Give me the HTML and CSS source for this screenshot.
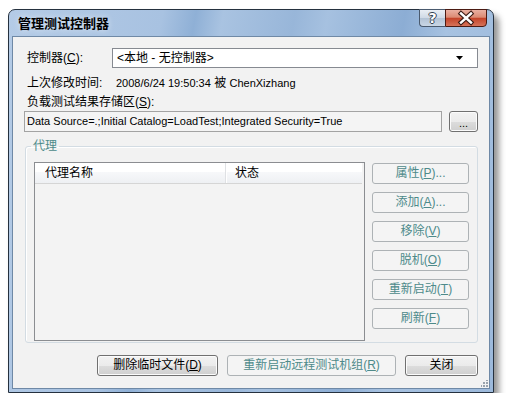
FILE: index.html
```html
<!DOCTYPE html>
<html lang="zh-CN">
<head>
<meta charset="utf-8">
<title>管理测试控制器</title>
<link rel="stylesheet" href="styles.css">
</head>
<body>
<div class="stage">
  <div class="window">
    <div class="titlebar">
      <div class="title">管理测试控制器</div>
      <div class="caption-btns">
        <div class="cbtn help"><span class="qmark">?</span></div>
        <div class="cbtn close">
          <svg width="40" height="16" viewBox="0 0 40 16">
            <path d="M15 3.5 L25 12.5 M25 3.5 L15 12.5" stroke="#3a1a14" stroke-width="4.6" stroke-linecap="square" fill="none"/>
            <path d="M15 3.5 L25 12.5 M25 3.5 L15 12.5" stroke="#ffffff" stroke-width="2.4" stroke-linecap="square" fill="none"/>
          </svg>
        </div>
      </div>
    </div>
    <div class="client">
      <div class="row r1">
        <span class="lbl">控制器(<u>C</u>):</span>
        <div class="combo">
          <span class="combo-text">&lt;本地 - 无控制器&gt;</span>
          <svg class="arrow" width="7" height="4" viewBox="0 0 7 4"><path d="M0 0 H7 L3.5 4 Z" fill="#000"/></svg>
        </div>
      </div>
      <div class="row r2">
        <span class="lbl2">上次修改时间:</span><span class="lat">2008/6/24 19:50:34</span> 被 <span class="lat">ChenXizhang</span>
      </div>
      <div class="row r3">负载测试结果存储区(<u>S</u>):</div>
      <div class="row r4">
        <div class="textbox">Data Source=.;Initial Catalog=LoadTest;Integrated Security=True</div>
        <button class="btn btn-on browse">...</button>
      </div>
      <fieldset class="group">
        <legend>代理</legend>
        <div class="group-body">
          <div class="listview">
            <div class="lv-header">
              <div class="col c1">代理名称</div>
              <div class="col c2">状态</div>
            </div>
          </div>
          <div class="side-btns">
            <button class="btn btn-off">属性(<u>P</u>)...</button>
            <button class="btn btn-off">添加(<u>A</u>)...</button>
            <button class="btn btn-off">移除(<u>V</u>)</button>
            <button class="btn btn-off">脱机(<u>O</u>)</button>
            <button class="btn btn-off">重新启动(<u>T</u>)</button>
            <button class="btn btn-off">刷新(<u>F</u>)</button>
          </div>
        </div>
      </fieldset>
      <div class="bottom-btns">
        <button class="btn btn-on b-del">删除临时文件(<u>D</u>)</button>
        <button class="btn btn-off b-restart">重新启动远程测试机组(<u>R</u>)</button>
        <button class="btn btn-on b-close">关闭</button>
      </div>
      <div class="grip"></div>
    </div>
  </div>
</div>
</body>
</html>
```

FILE: styles.css
```css
html, body {
  margin: 0;
  background: #ffffff;
}
body {
  font-family: "Liberation Sans", "Noto Sans CJK SC", sans-serif;
  font-size: 12px;
  color: #000;
}
.stage {
  padding: 9px 0 0 8px;
}
.window {
  width: 486px;
  height: 384px;
  box-sizing: border-box;
  border: 1px solid #25313f;
  border-radius: 7px 7px 0 0;
  padding: 0 3px 3px;
  display: flex;
  flex-direction: column;
  background: linear-gradient(100deg, #b4cbe6 0%, #a8c2e1 28%, #8fb0d6 34%, #a9c3e1 39%, #98b6d9 52%, #a6c1e0 58%, #8cadd4 72%, #a7c2e1 80%, #9cb9db 100%);
  box-shadow: 5px 6px 6px rgba(0, 0, 0, 0.42);
}
.titlebar {
  height: 26px;
  display: flex;
  justify-content: space-between;
  align-items: flex-start;
}
.title {
  font-weight: bold;
  font-size: 13px;
  line-height: 16px;
  padding: 6px 0 0 6px;
  text-shadow: 0 0 6px rgba(255, 255, 255, 0.6);
}
.caption-btns {
  display: flex;
  margin: -1px 3px 0 0;
}
.cbtn {
  height: 18px;
  box-sizing: border-box;
  display: flex;
  align-items: center;
  justify-content: center;
}
.help {
  width: 26px;
  border: 1px solid #4a5a6e;
  border-right: none;
  border-radius: 0 0 0 4px;
  background: linear-gradient(#e9eef4 0%, #d0dae6 48%, #b3c3d5 52%, #c9d6e5 100%);
}
.qmark {
  font-family: "DejaVu Sans", sans-serif;
  font-weight: bold;
  font-size: 14px;
  line-height: 14px;
  color: #ffffff;
  text-shadow: 1px 0 0 #33414f, -1px 0 0 #33414f, 0 1px 0 #33414f, 0 -1px 0 #33414f;
}
.close {
  width: 42px;
  border: 1px solid #4b1a12;
  border-radius: 0 0 4px 0;
  background: linear-gradient(#eab0a2 0%, #dc8b74 45%, #c4442a 52%, #d6735a 100%);
}
.client {
  flex: 1;
  position: relative;
  box-sizing: border-box;
  border: 1px solid #6f89a6;
  background: #f2f2f2;
  padding-top: 11px;
}
.row {
  line-height: 16px;
}
.r1 {
  margin-left: 14px;
  display: flex;
  align-items: center;
  height: 20px;
}
.lbl {
  width: 85px;
}
.combo {
  width: 366px;
  height: 20px;
  box-sizing: border-box;
  border: 1px solid #868a91;
  background: #ffffff;
  display: flex;
  align-items: center;
  padding-left: 4px;
}
.arrow {
  margin-left: auto;
  margin-right: 14px;
}
.r2 {
  margin: 7px 0 0 14px;
}
.lbl2 {
  display: inline-block;
  width: 89px;
}
.lat {
  font-size: 11px;
}
.r3 {
  margin: 3px 0 0 14px;
}
.r4 {
  margin: 1px 0 0 11px;
  display: flex;
  gap: 7px;
}
.textbox {
  width: 418px;
  height: 21px;
  box-sizing: border-box;
  border: 1px solid #a3a3a3;
  background: #f4f4f4;
  padding-left: 2px;
  font-size: 11px;
  line-height: 19px;
  white-space: nowrap;
}
.btn {
  height: 21px;
  box-sizing: border-box;
  border-radius: 3px;
  font: inherit;
  padding: 0;
  margin: 0;
  line-height: 19px;
  text-align: center;
}
.btn u {
  text-underline-offset: 1px;
}
.btn-on {
  border: 1px solid #707070;
  color: #000;
  background: linear-gradient(#f2f2f2 0%, #ebebeb 50%, #dddddd 51%, #cfcfcf 100%);
  box-shadow: inset 0 0 0 1px #fbfbfb;
}
.btn-off {
  border: 1px solid #adb2b5;
  color: #4d8a8a;
  background: #f4f4f4;
}
.browse {
  width: 29px;
  font-size: 11px;
  line-height: 22px;
}
.group {
  margin: 6px 11px 0 12px;
  padding: 8px 8px 1px;
  border: 1px solid #d3dce3;
  border-radius: 3px;
  box-shadow: inset 1px 1px 0 #ffffff;
  min-width: 0;
}
.group legend {
  padding: 0 2px;
  margin-left: -3px;
  line-height: 16px;
  color: #4d8a8a;
}
.group-body {
  display: flex;
  gap: 7px;
}
.listview {
  width: 331px;
  height: 179px;
  box-sizing: border-box;
  border: 1px solid #8b8d91;
  background: #f3f3f3;
}
.lv-header {
  display: flex;
  height: 21px;
  box-sizing: border-box;
  margin-right: 2px;
  border-bottom: 1px solid #d5d5d5;
  background: linear-gradient(#ffffff 0%, #ffffff 45%, #f7f8fa 46%, #eef0f3 100%);
  line-height: 20px;
}
.col.c1 {
  width: 191px;
  padding-left: 10px;
  box-sizing: border-box;
  border-right: 1px solid #dfe1e4;
}
.col.c2 {
  padding-left: 8px;
  border-left: 1px solid #ffffff;
}
.side-btns {
  display: flex;
  flex-direction: column;
  gap: 8px;
  padding-top: 1px;
}
.side-btns .btn {
  width: 97px;
}
.bottom-btns {
  display: flex;
  justify-content: flex-end;
  gap: 9px;
  margin: 12px 11px 0 0;
}
.b-del { width: 121px; }
.b-restart { width: 169px; }
.b-close { width: 73px; }
.grip {
  position: absolute;
  right: 1px;
  bottom: 1px;
  width: 7px;
  height: 7px;
  background:
    radial-gradient(circle at 6px 6px, #9aa3ad 0.9px, transparent 1.1px),
    radial-gradient(circle at 3px 6px, #9aa3ad 0.9px, transparent 1.1px),
    radial-gradient(circle at 6px 3px, #9aa3ad 0.9px, transparent 1.1px),
    radial-gradient(circle at 0.5px 6px, #9aa3ad 0.9px, transparent 1.1px),
    radial-gradient(circle at 3px 3px, #9aa3ad 0.9px, transparent 1.1px),
    radial-gradient(circle at 6px 0.5px, #9aa3ad 0.9px, transparent 1.1px);
}
```
